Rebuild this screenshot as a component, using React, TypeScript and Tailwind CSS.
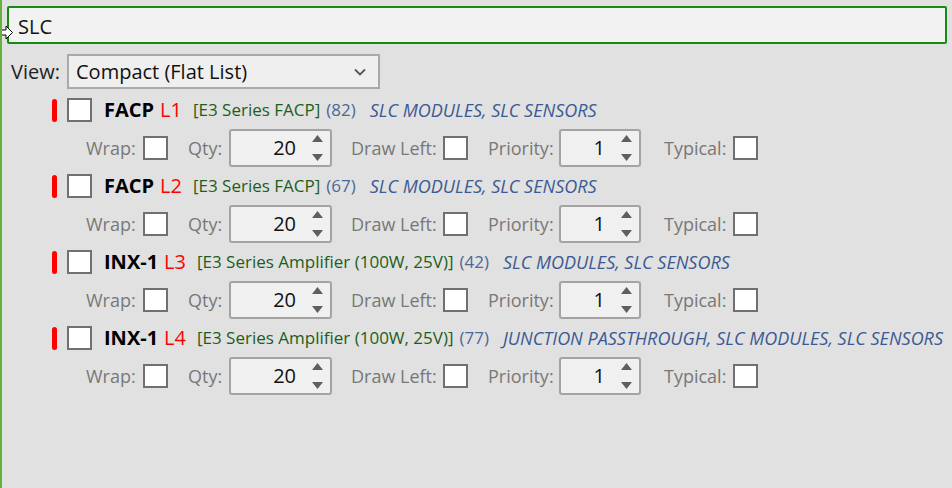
import React from 'react';

// --- data ---
type Item = { name: string; line: string; desc: string; count: number; cats: string };

const items: Item[] = [
  { name: 'FACP', line: 'L1', desc: '[E3 Series FACP]', count: 82, cats: 'SLC MODULES, SLC SENSORS' },
  { name: 'FACP', line: 'L2', desc: '[E3 Series FACP]', count: 67, cats: 'SLC MODULES, SLC SENSORS' },
  { name: 'INX-1', line: 'L3', desc: '[E3 Series Amplifier (100W, 25V)]', count: 42, cats: 'SLC MODULES, SLC SENSORS' },
  { name: 'INX-1', line: 'L4', desc: '[E3 Series Amplifier (100W, 25V)]', count: 77, cats: 'JUNCTION PASSTHROUGH, SLC MODULES, SLC SENSORS' },
];

const Check: React.FC = () => (
  <div className="w-[25px] h-[24px] border-2 border-[#707070] bg-white shrink-0" />
);

const Spinner: React.FC<{ value: number; width: string }> = ({ value, width }) => (
  <div className={`${width} h-[38px] border-2 border-[#a3a3a3] rounded-[3px] bg-[#f0f0f0] flex items-center shrink-0`}>
    <span className="flex-1 text-right text-[20px] text-[#111] pr-[14px]">{value}</span>
    <div className="flex flex-col items-center justify-between h-[26px] w-[14px] mr-[6px]">
      <svg width="11" height="7" viewBox="0 0 11 7"><path d="M5.5 0L11 7H0z" fill="#5f5f5f" /></svg>
      <svg width="11" height="7" viewBox="0 0 11 7"><path d="M0 0H11L5.5 7z" fill="#5f5f5f" /></svg>
    </div>
  </div>
);

const Label: React.FC<{ text: string; width: string }> = ({ text, width }) => (
  <span className={`${width} shrink-0 text-[18px] text-[#787878]`}>{text}</span>
);

const ItemRow: React.FC<{ item: Item }> = ({ item }) => (
  <div className="flex flex-col">
    {/* header line */}
    <div className="flex items-center h-[24px] whitespace-nowrap">
      <div className="w-[5px] h-[23px] rounded-[3px] bg-[#ff0000] shrink-0" />
      <div className="ml-[10px]"><Check /></div>
      <span className="ml-[12px] text-[20px] font-bold text-black">{item.name}</span>
      <span className="ml-[6px] text-[20px] text-[#ff0000]">{item.line}</span>
      <span className="ml-[11px] text-[17px] text-[#1c5e1c]">{item.desc}</span>
      <span className="ml-[6px] text-[17px] text-[#4a6898]">({item.count})</span>
      <span className="ml-[14px] text-[18px] italic text-[#3b5a94]">{item.cats}</span>
    </div>
    {/* options line */}
    <div className="flex items-center h-[38px] mt-[7px] mb-[7px] pl-[34px]">
      <Label text="Wrap:" width="w-[57px]" />
      <Check />
      <div className="w-[20px]" />
      <Label text="Qty:" width="w-[41px]" />
      <Spinner value={20} width="w-[103px]" />
      <div className="w-[19px]" />
      <Label text="Draw Left:" width="w-[92px]" />
      <Check />
      <div className="w-[20px]" />
      <Label text="Priority:" width="w-[71px]" />
      <Spinner value={1} width="w-[82px]" />
      <div className="w-[23px]" />
      <Label text="Typical:" width="w-[69px]" />
      <Check />
    </div>
  </div>
);

export default function App() {
  return (
    <div
      className="relative w-[952px] h-[488px] bg-[#e1e1e1] border-l-2 border-[#66b13e] overflow-hidden"
      style={{ fontFamily: '"Open Sans", "Noto Sans", sans-serif' }}
    >
      {/* search box */}
      <div className="mt-[6px] ml-[5px] mr-[5px] h-[38px] border-2 border-[#148c14] rounded-[2px] bg-[#f2f2f2] flex items-center pl-[9px] pt-[3px] text-[20px] text-[#111]">
        SLC
      </div>

      {/* resize cursor over the box edge */}
      <svg className="absolute left-[-4px] top-[25px]" width="16" height="15" viewBox="0 0 16 15">
        <path d="M0.5 5H8V1L14.5 7.5L8 14V10H0.5z" fill="#fff" stroke="#000" strokeWidth="1" />
      </svg>

      {/* view selector */}
      <div className="flex items-center mt-[10px] ml-[9px]">
        <span className="text-[20px] text-[#222] w-[56px]">View:</span>
        <div className="w-[313px] h-[35px] border-2 border-[#a9a9a9] bg-[#efefef] flex items-center pl-[7px] pr-[12px]">
          <span className="flex-1 text-[20px] text-[#111]">Compact (Flat List)</span>
          <svg width="12" height="8" viewBox="0 0 12 8">
            <path d="M1 1.5L6 6.5L11 1.5" fill="none" stroke="#555" strokeWidth="1.8" />
          </svg>
        </div>
      </div>

      {/* list */}
      <div className="flex flex-col pl-[50px] mt-[9px]">
        {items.map((it, i) => (
          <ItemRow key={i} item={it} />
        ))}
      </div>
    </div>
  );
}
